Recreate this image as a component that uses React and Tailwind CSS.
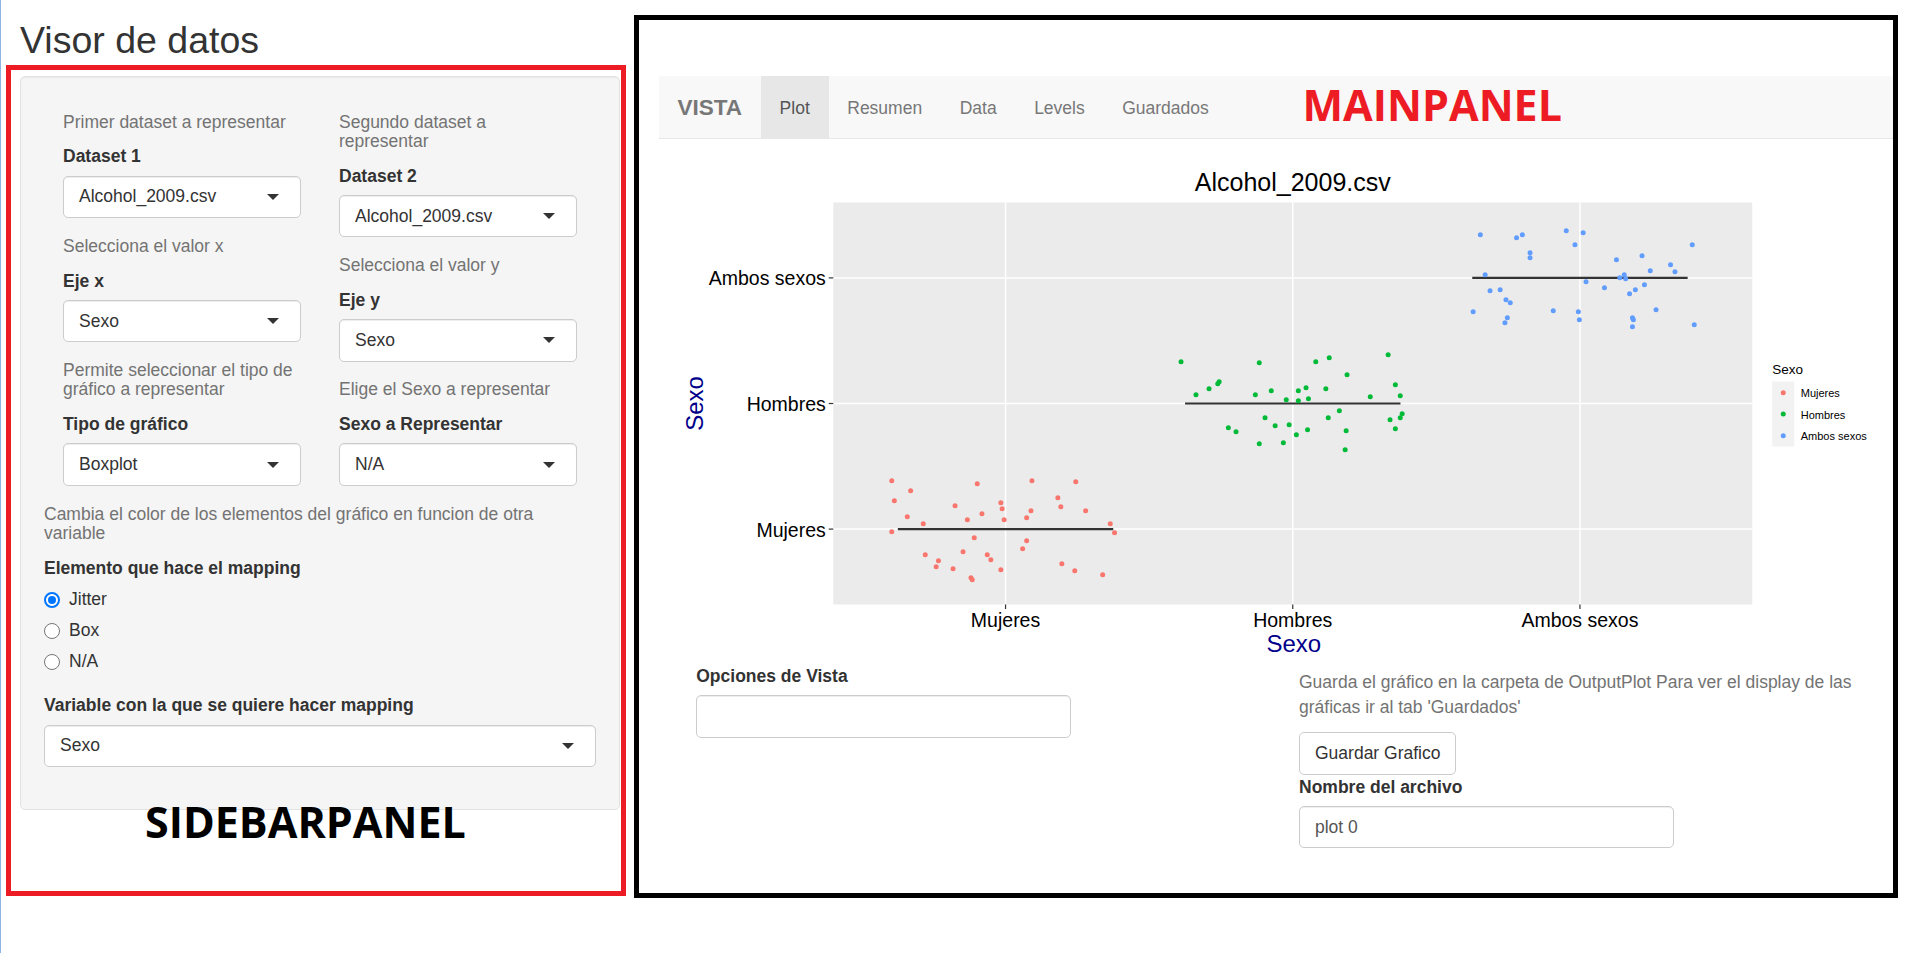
import React from "react";

const mujeres = [
  [891.5, 480.3], [910.4, 490.3], [894.1, 500.3], [977.0, 483.3], [1031.7, 480.3], [1075.5, 481.3],
  [1057.6, 497.3], [954.8, 505.3], [1000.6, 502.3], [1001.9, 508.3], [1060.6, 506.3], [1085.4, 510.3],
  [981.7, 513.3], [1030.7, 510.3], [907.0, 516.3], [967.1, 519.3], [1003.9, 519.3], [1026.4, 517.3],
  [923.0, 523.3], [1110.0, 523.3], [891.5, 531.3], [1114.3, 532.3], [974.0, 537.3], [1026.4, 540.3],
  [1022.4, 548.3], [962.8, 551.3], [925.0, 554.3], [987.0, 554.3], [938.2, 560.3], [990.6, 559.3],
  [935.9, 566.3], [952.8, 568.3], [1000.6, 569.3], [1061.6, 563.3], [1074.5, 570.3], [1102.4, 574.3],
  [970.7, 577.3], [972.0, 579.3],
];

const hombres = [
  [1180.8, 361.3], [1259.0, 362.3], [1315.5, 361.3], [1329.0, 357.3], [1387.9, 354.3], [1346.8, 374.3],
  [1218.9, 381.3], [1217.5, 383.3], [1208.8, 388.3], [1195.7, 394.3], [1255.1, 394.3], [1271.0, 390.3],
  [1298.1, 390.3], [1305.8, 387.3], [1325.6, 388.3], [1395.1, 384.3], [1400.0, 395.3], [1370.0, 396.3],
  [1286.0, 399.3], [1298.1, 400.3], [1308.2, 398.3], [1339.1, 410.3], [1264.8, 417.3], [1328.0, 417.3],
  [1389.8, 419.3], [1400.0, 417.3], [1401.9, 413.3], [1274.9, 425.3], [1288.9, 424.3], [1228.1, 427.3],
  [1235.8, 431.3], [1307.3, 429.3], [1345.9, 430.3], [1395.1, 428.3], [1296.1, 434.3], [1259.0, 443.3],
  [1283.1, 442.3], [1344.9, 449.3],
];

const ambos = [
  [1480.1, 234.3], [1516.3, 237.3], [1522.1, 234.3], [1566.0, 230.3], [1582.9, 232.3], [1574.7, 244.3],
  [1529.8, 252.3], [1529.8, 257.3], [1692.0, 244.3], [1616.2, 259.3], [1641.8, 255.3], [1670.3, 264.3],
  [1674.7, 271.3], [1650.0, 270.3], [1484.9, 274.3], [1619.6, 277.3], [1624.0, 274.3], [1625.4, 278.3],
  [1585.8, 281.3], [1604.2, 287.3], [1644.2, 284.3], [1635.1, 289.3], [1629.3, 293.3], [1489.8, 290.3],
  [1499.9, 289.3], [1505.7, 299.3], [1510.0, 302.3], [1472.9, 311.3], [1553.0, 310.3], [1578.1, 311.3],
  [1579.1, 319.3], [1655.8, 309.3], [1632.2, 317.3], [1633.1, 319.3], [1632.2, 326.3], [1507.1, 317.3],
  [1504.7, 322.3], [1694.0, 324.3],
];

function Caret() {
  return (
    <svg width="12" height="6" viewBox="0 0 12 6" className="shrink-0">
      <path d="M0 0H12L6 6Z" fill="#333333" />
    </svg>
  );
}

function Select({ value }) {
  return (
    <div className="h-[42.5px] border-[1.25px] border-[#cccccc] rounded-[5px] bg-white shadow-[inset_0_1px_1px_rgba(0,0,0,0.075)] flex items-center justify-between pl-[15px] pr-[21px] text-[17.5px] leading-[25px] text-[#333333]">
      <span>{value}</span>
      <Caret />
    </div>
  );
}

function Help({ children, first }) {
  return (
    <div
      className={
        first
          ? "mt-[12.5px] text-[17.5px] leading-[19.25px] text-[#737373]"
          : "mt-[18.75px] text-[17.5px] leading-[19.25px] text-[#737373]"
      }
    >
      {children}
    </div>
  );
}

function Label({ children, className }) {
  return (
    <div className={"font-bold text-[17.5px] leading-[25px] text-[#333333] mb-[6.25px] " + (className || "")}>
      {children}
    </div>
  );
}

function Field({ help, label, value, first }) {
  return (
    <>
      <Help first={first}>{help}</Help>
      <Label className="mt-[12.5px]">{label}</Label>
      <Select value={value} />
    </>
  );
}

function Radio({ checked, label, className }) {
  return (
    <div className={"flex items-start h-[25px] " + (className || "")}>
      {checked ? (
        <div className="mt-[5px] w-[16px] h-[16px] rounded-full border-[2px] border-[#0075ff] bg-white flex items-center justify-center shrink-0">
          <div className="w-[8px] h-[8px] rounded-full bg-[#0075ff]" />
        </div>
      ) : (
        <div className="mt-[5px] w-[16px] h-[16px] rounded-full border-[1.25px] border-[#767676] bg-white shrink-0" />
      )}
      <span className="ml-[9px] text-[17.5px] leading-[25px] text-[#333333]">{label}</span>
    </div>
  );
}

function Plot() {
  const xs = [1005.3, 1292.5, 1579.7];
  const ys = [528.6, 403, 277.4];
  const labels = ["Mujeres", "Hombres", "Ambos sexos"];
  const cols = ["#F8766D", "#00BA38", "#619CFF"];
  const data = [mujeres, hombres, ambos];
  return (
    <svg
      width="1234"
      height="521.5"
      viewBox="658.75 138.5 1234 521.5"
      className="block shrink-0"
      fontFamily="'Liberation Sans', Arial, sans-serif"
    >
      <text x="1292.5" y="190" textAnchor="middle" fontSize="25" fill="#000">
        Alcohol_2009.csv
      </text>
      <rect x="833" y="202" width="919" height="402" fill="#EBEBEB" />
      {xs.map((x) => (
        <line key={"vx" + x} x1={x} x2={x} y1="202" y2="604" stroke="#fff" strokeWidth="1.5" />
      ))}
      {ys.map((y) => (
        <line key={"hy" + y} x1="833" x2="1752" y1={y} y2={y} stroke="#fff" strokeWidth="1.5" />
      ))}
      {ys.map((y, i) => (
        <g key={"yl" + i}>
          <line x1="828.5" x2="833" y1={y} y2={y} stroke="#333" strokeWidth="1.2" />
          <text x="825.5" y={y + 7.5} textAnchor="end" fontSize="19.5" fill="#000">
            {labels[i]}
          </text>
        </g>
      ))}
      {xs.map((x, i) => (
        <g key={"xl" + i}>
          <line x1={x} x2={x} y1="604" y2="608.5" stroke="#333" strokeWidth="1.2" />
          <text x={x} y="626" textAnchor="middle" fontSize="19.5" fill="#000">
            {labels[i]}
          </text>
        </g>
      ))}
      <text x="1293.5" y="651.7" textAnchor="middle" fontSize="24" fill="#00008B">
        Sexo
      </text>
      <text
        x="703"
        y="403"
        textAnchor="middle"
        fontSize="24"
        fill="#00008B"
        transform="rotate(-90 703 403)"
      >
        Sexo
      </text>
      {xs.map((x, i) => (
        <line
          key={"med" + i}
          x1={x - 107.7}
          x2={x + 107.7}
          y1={ys[i]}
          y2={ys[i]}
          stroke="#333333"
          strokeWidth="2.2"
        />
      ))}
      {data.map((pts, i) =>
        pts.map(([cx, cy], j) => <circle key={i + "-" + j} cx={cx} cy={cy} r="2.5" fill={cols[i]} />)
      )}
      <text x="1772" y="373.3" fontSize="13.5" fill="#000">
        Sexo
      </text>
      <rect x="1772" y="381" width="22" height="65" fill="#F2F2F2" />
      {[392.3, 413.5, 435.3].map((cy, i) => (
        <g key={"lg" + i}>
          <circle cx="1783" cy={cy} r="2.5" fill={cols[i]} />
          <text x="1800.5" y={cy + 4.5} fontSize="11" fill="#000">
            {labels[i]}
          </text>
        </g>
      ))}
    </svg>
  );
}

export default function App() {
  return (
    <div className="flex w-[1917px] h-[953px] bg-white overflow-hidden font-['Liberation_Sans',Arial,sans-serif]">
      <div className="w-[1px] bg-[#8fb4e3] shrink-0" />

      {/* Left side */}
      <div className="ml-[5px] w-[620px] shrink-0 flex flex-col">
        <h2 className="mt-[20px] h-[45px] pl-[14px] text-[37.5px] leading-[41px] font-normal text-[#333333]">
          Visor de datos
        </h2>
        <div className="h-[831px] border-[5px] border-[#ed1c24] flex flex-col">
          <div className="mt-[6px] ml-[9px] w-[600px] bg-[#f5f5f5] border border-[#e3e3e3] rounded-[5px] shadow-[inset_0_1px_1px_rgba(0,0,0,0.05)] pt-[23px] px-[23px] pb-[42px] flex flex-col">
            <div className="flex">
              <div className="w-[276px] px-[19px] flex flex-col">
                <Field first help="Primer dataset a representar" label="Dataset 1" value="Alcohol_2009.csv" />
                <Field help="Selecciona el valor x" label="Eje x" value="Sexo" />
                <Field help="Permite seleccionar el tipo de gráfico a representar" label="Tipo de gráfico" value="Boxplot" />
              </div>
              <div className="w-[276px] px-[19px] flex flex-col">
                <Field first help="Segundo dataset a representar" label="Dataset 2" value="Alcohol_2009.csv" />
                <Field help="Selecciona el valor y" label="Eje y" value="Sexo" />
                <Field help="Elige el Sexo a representar" label="Sexo a Representar" value="N/A" />
              </div>
            </div>
            <Help>Cambia el color de los elementos del gráfico en funcion de otra variable</Help>
            <Label className="mt-[12.5px]">Elemento que hace el mapping</Label>
            <Radio checked label="Jitter" />
            <Radio label="Box" className="mt-[6.25px]" />
            <Radio label="N/A" className="mt-[6.25px]" />
            <Label className="mt-[19px]">Variable con la que se quiere hacer mapping</Label>
            <Select value="Sexo" />
          </div>
          <div className="-mt-[10px] pl-[134px] font-['Open_Sans',sans-serif] font-bold text-[43px] leading-[43px] text-black">
            SIDEBARPANEL
          </div>
        </div>
      </div>

      {/* Main panel */}
      <div className="ml-[8px] mt-[15px] w-[1264px] h-[883px] shrink-0 border-[5px] border-black flex flex-col pl-[19.75px] overflow-hidden">
        <div className="mt-[56px] h-[62.5px] w-[1234px] shrink-0 bg-[#f8f8f8] border-b-[1.25px] border-[#e7e7e7] flex items-stretch">
          <div className="px-[18.75px] pt-[18.75px] text-[22.5px] leading-[25px] font-bold text-[#777777]">VISTA</div>
          <div className="px-[18.75px] pt-[20px] text-[17.5px] leading-[25px] bg-[#e7e7e7] text-[#555555]">Plot</div>
          <div className="px-[18.75px] pt-[20px] text-[17.5px] leading-[25px] text-[#777777]">Resumen</div>
          <div className="px-[18.75px] pt-[20px] text-[17.5px] leading-[25px] text-[#777777]">Data</div>
          <div className="px-[18.75px] pt-[20px] text-[17.5px] leading-[25px] text-[#777777]">Levels</div>
          <div className="px-[18.75px] pt-[20px] text-[17.5px] leading-[25px] text-[#777777]">Guardados</div>
          <div className="ml-[75px] mt-[6.5px] font-['Open_Sans',sans-serif] font-bold text-[43px] leading-[43px] text-[#ed1c24]">
            MAINPANEL
          </div>
        </div>

        <Plot />

        <div className="flex">
          <div className="w-[602px] pl-[37.5px] pt-[4px] flex flex-col">
            <Label>Opciones de Vista</Label>
            <div className="w-[375px] h-[42.5px] border-[1.25px] border-[#cccccc] rounded-[5px] bg-white shadow-[inset_0_1px_1px_rgba(0,0,0,0.075)]" />
          </div>
          <div className="w-[602px] pl-[38.25px] pt-[9.7px] flex flex-col">
            <div className="text-[17.5px] leading-[25px] text-[#737373]">
              Guarda el gráfico en la carpeta de OutputPlot Para ver el display de las gráficas ir al tab 'Guardados'
            </div>
            <div className="mt-[12.5px] self-start h-[42.5px] px-[15px] border-[1.25px] border-[#cccccc] rounded-[5px] bg-white flex items-center text-[17.5px] leading-[25px] text-[#333333]">
              Guardar Grafico
            </div>
            <Label>Nombre del archivo</Label>
            <div className="w-[375px] h-[42.5px] border-[1.25px] border-[#cccccc] rounded-[5px] bg-white shadow-[inset_0_1px_1px_rgba(0,0,0,0.075)] flex items-center pl-[15px] text-[17.5px] leading-[25px] text-[#555555]">
              plot 0
            </div>
          </div>
        </div>
      </div>
    </div>
  );
}
